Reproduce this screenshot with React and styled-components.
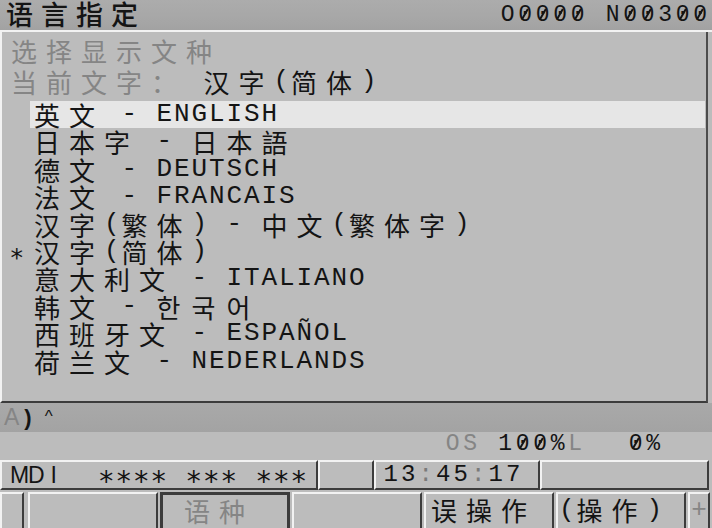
import React from "react";
import styled, { createGlobalStyle, css } from "styled-components";

const CJK = `"Noto Sans CJK SC", "Noto Sans CJK KR", sans-serif`;
const MONO = `"Liberation Mono", "Noto Sans CJK SC", monospace`;
const SANS = `"Liberation Sans", "Noto Sans CJK SC", sans-serif`;
const STAR = `"DejaVu Sans", sans-serif`;

const INK = "#141414";
const MUTED = "#858585";
const LIGHT = "#f2f2f2";
const DARK = "#3c3c3c";
const BG = "#bcbcbc";

const Global = createGlobalStyle`
  html, body { margin: 0; padding: 0; background: ${BG}; }
  body { width: 712px; height: 528px; overflow: hidden; }
`;

const isWide = (ch) => {
  const c = ch.codePointAt(0);
  return c >= 0x2e80 || (c >= 0x1100 && c <= 0x11ff);
};

const Cell = styled.span`
  display: inline-block;
  flex: none;
  position: relative;
  box-sizing: border-box;
  width: ${(p) => (p.$wide ? 35 : 17.5)}px;
  padding-left: ${(p) => (p.$wide ? 1 : 0)}px;
  text-align: ${(p) => (p.$wide ? "left" : "center")};
  white-space: pre;
  font-family: ${(p) => (p.$wide ? CJK : "inherit")};
  font-size: ${(p) => (p.$wide ? "var(--cjk, 26px)" : "inherit")};
  color: ${(p) => p.$tone || "inherit"};
  ${(p) =>
    p.$star &&
    css`
      font-family: ${STAR};
      font-size: var(--star, 26px);
      padding-top: 13px;
    `}
  ${(p) =>
    p.$slash &&
    css`
      &::after {
        content: "";
        position: absolute;
        left: 50%;
        top: 50%;
        width: 2px;
        height: 0.5em;
        margin-top: var(--slash-y, 0px);
        background: currentColor;
        transform: translate(-50%, -50%) rotate(30deg);
      }
    `}
`;

const CharRun = styled.span`
  display: inline-flex;
  align-items: center;
`;

function Chars({ text, tone, toneFor, slashZero }) {
  return (
    <CharRun>
      {Array.from(text).map((ch, i) => (
        <Cell
          key={i}
          $wide={isWide(ch)}
          $star={ch === "*"}
          $slash={slashZero && ch === "0"}
          $tone={(toneFor && toneFor(ch)) || tone}
        >
          {ch}
        </Cell>
      ))}
    </CharRun>
  );
}

/* ---------- top bar ---------- */
const TopBar = styled.header`
  box-sizing: border-box;
  height: 32px;
  display: flex;
  align-items: center;
  justify-content: space-between;
  padding: 0 3px 0 5px;
  background: linear-gradient(to bottom, #acacac, #a7a7a7 60%, #a2a2a2);
  border-bottom: 2px solid ${LIGHT};
`;

const Title = styled.h1`
  margin: 0;
  line-height: 30px;
  font-size: 26px;
  font-weight: 500;
  color: ${INK};
  --cjk: 27px;
`;

const ProgramNo = styled.div`
  line-height: 30px;
  font-family: ${MONO};
  font-size: 23px;
  color: ${INK};
  --slash-y: -1px;
`;

/* ---------- main panel ---------- */
const Panel = styled.section`
  box-sizing: border-box;
  height: 371px;
  margin-right: 4px;
  padding: 3px 0 0 8px;
  border-left: 2px solid ${LIGHT};
  border-right: 2px solid #4c4c4c;
  border-bottom: 2px solid ${DARK};
  background: ${BG};
  font-family: ${MONO};
  font-size: 26px;
  color: ${INK};
`;

const InfoLine = styled.div`
  display: flex;
  align-items: center;
  height: 31px;
  line-height: 31px;
  color: ${(p) => (p.$muted ? MUTED : INK)};
`;

const List = styled.ul`
  list-style: none;
  margin: 4px 0 0;
  padding: 0;
`;

const Row = styled.li`
  display: flex;
  align-items: stretch;
  height: 27.4px;
  line-height: 27.4px;
`;

const Marker = styled.span`
  width: 22px;
  flex: none;
  display: flex;
  align-items: center;
  margin-left: -2px;
  color: ${INK};
  --star: 25px;
`;

const Label = styled.span`
  flex: 1;
  display: flex;
  align-items: center;
  margin-right: 1px;
  padding-left: 3px;
  background: ${(p) => (p.$selected ? "#e6e6e6" : "transparent")};
`;

/* ---------- input line ---------- */
const InputBand = styled.div`
  height: 29px;
  display: flex;
  align-items: center;
  padding-left: 4px;
  background: linear-gradient(to bottom, #a9a9a9, #a3a3a3);
  font-family: ${SANS};
`;

const Prompt = styled.span`
  font-size: 23px;
  color: ${MUTED};
`;

const PromptParen = styled.span`
  margin-left: 5px;
  font-size: 22px;
  font-weight: 700;
  color: ${INK};
`;

const Caret = styled.span`
  margin-left: 13px;
  align-self: flex-start;
  margin-top: 4px;
  font-size: 17px;
  color: ${INK};
`;

/* ---------- override row ---------- */
const OverrideRow = styled.div`
  box-sizing: border-box;
  height: 28px;
  display: flex;
  align-items: center;
  padding: 0 0 4px 444px;
  font-family: ${MONO};
  font-size: 23px;
  line-height: 24px;
  color: ${INK};
  --slash-y: -1px;
`;

const RunGap = styled.span`
  display: inline-flex;
  margin-left: ${(p) => p.$gap}px;
`;

/* ---------- status row ---------- */
const StatusRow = styled.div`
  display: flex;
  height: 30px;
  margin-bottom: 2px;
`;

const StatusBox = styled.div`
  box-sizing: border-box;
  width: ${(p) => p.$w}px;
  flex: none;
  display: flex;
  align-items: center;
  padding-left: ${(p) => p.$pad || 0}px;
  border-top: 2px solid ${LIGHT};
  border-left: 2px solid ${LIGHT};
  border-bottom: 2px solid ${DARK};
  border-right: 2px solid ${DARK};
  font-family: ${(p) => p.$font || MONO};
  font-size: ${(p) => p.$size || 22}px;
  line-height: 26px;
  color: ${INK};
  --star: 28px;
`;

/* ---------- soft keys ---------- */
const SoftKeys = styled.nav`
  display: flex;
  height: 36px;
  overflow: hidden;
`;

const Key = styled.div`
  box-sizing: border-box;
  flex: none;
  width: ${(p) => p.$w}px;
  height: 42px;
  margin-left: ${(p) => p.$gap || 0}px;
  display: flex;
  align-items: flex-start;
  justify-content: ${(p) => (p.$center ? "center" : "flex-start")};
  padding-left: ${(p) => p.$pad || 0}px;
  border-style: solid;
  border-width: ${(p) => (p.$active ? "3px" : "2px")};
  border-color: ${(p) =>
    p.$active ? DARK : `${LIGHT} ${DARK} ${DARK} ${LIGHT}`};
  font-family: ${MONO};
  font-size: 26px;
  line-height: ${(p) => (p.$active ? 31 : 32)}px;
  color: ${(p) => (p.$muted ? MUTED : INK)};
`;

const Screen = styled.main`
  width: 712px;
  height: 528px;
  overflow: hidden;
  display: flex;
  flex-direction: column;
  background: ${BG};
`;

const LANGS = [
  { text: "英文 - ENGLISH", selected: true },
  { text: "日本字 - 日本語" },
  { text: "德文 - DEUTSCH" },
  { text: "法文 - FRANCAIS" },
  { text: "汉字(繁体) - 中文(繁体字)" },
  { text: "汉字(简体)", current: true },
  { text: "意大利文 - ITALIANO" },
  { text: "韩文 - 한국어" },
  { text: "西班牙文 - ESPAÑOL" },
  { text: "荷兰文 - NEDERLANDS" },
];

const mutedOS = (ch) => (ch === "O" || ch === "S" || ch === "L" ? MUTED : null);
const mutedColon = (ch) => (ch === ":" ? "#7a7a7a" : null);

export default function App() {
  return (
    <Screen>
      <Global />
      <TopBar>
        <Title>
          <Chars text="语言指定" />
        </Title>
        <ProgramNo>
          <Chars text="O0000 N00300" slashZero />
        </ProgramNo>
      </TopBar>

      <Panel>
        <InfoLine $muted>
          <Chars text="选择显示文种" />
        </InfoLine>
        <InfoLine>
          <Chars text="当前文字：" tone={MUTED} />
          <Chars text=" 汉字(简体)" />
        </InfoLine>
        <List>
          {LANGS.map((l) => (
            <Row key={l.text}>
              <Marker>{l.current && <Chars text="*" />}</Marker>
              <Label $selected={l.selected}>
                <Chars text={l.text} />
              </Label>
            </Row>
          ))}
        </List>
      </Panel>

      <InputBand>
        <Prompt>A</Prompt>
        <PromptParen>)</PromptParen>
        <Caret>^</Caret>
      </InputBand>

      <OverrideRow>
        <Chars text="OS 100%L" toneFor={mutedOS} slashZero />
        <RunGap $gap={43}>
          <Chars text="0%" slashZero />
        </RunGap>
      </OverrideRow>

      <StatusRow>
        <StatusBox $w={318} $pad={8} $font={SANS} $size={23}>
          <Chars text="MDI  **** *** ***" />
        </StatusBox>
        <StatusBox $w={56} />
        <StatusBox $w={166} $pad={6} $size={24}>
          <Chars text="13:45:17" toneFor={mutedColon} />
        </StatusBox>
        <StatusBox $w={169} />
      </StatusRow>

      <SoftKeys>
        <Key $w={24} />
        <Key $w={130} $gap={4} />
        <Key $w={130} $gap={2} $active $muted $pad={20}>
          <Chars text="语种" />
        </Key>
        <Key $w={130} $gap={2} />
        <Key $w={130} $gap={2} $pad={4}>
          <Chars text="误操作" />
        </Key>
        <Key $w={130} $gap={2}>
          <Chars text="(操作)" />
        </Key>
        <Key $w={22} $gap={2} $muted $center>
          <Chars text="+" />
        </Key>
      </SoftKeys>
    </Screen>
  );
}
